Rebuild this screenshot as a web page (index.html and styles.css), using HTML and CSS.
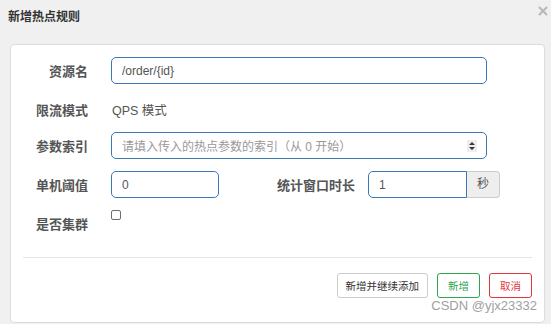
FILE: index.html
```html
<!DOCTYPE html>
<html lang="zh-CN">
<head>
  <meta charset="UTF-8">
  <title>新增热点规则</title>
  <meta name="viewport" content="width=device-width, initial-scale=1.0">
  <link rel="stylesheet" href="styles.css">
</head>
<body>
  <div class="dialogo">
    <div class="cabecera">
      <h3 class="titulo">新增热点规则</h3>
      <span class="cerrar">
        <svg width="10" height="10" viewBox="0 0 10 10"><path d="M1 1 L9 9 M9 1 L1 9" stroke="#b8b8b8" stroke-width="2"/></svg>
      </span>
    </div>

    <div class="panel">
      <div class="fila">
        <label class="etiqueta">资源名</label>
        <input class="campo campo-largo" value="/order/{id}">
      </div>
      <div class="fila">
        <label class="etiqueta">限流模式</label>
        <span class="texto">QPS 模式</span>
      </div>
      <div class="fila">
        <label class="etiqueta">参数索引</label>
        <div class="campo campo-largo selector">
          <span class="placeholder">请填入传入的热点参数的索引（从 0 开始）</span>
          <span class="flechas">
            <svg width="10" height="12" viewBox="0 0 10 12"><path d="M2 5 L5 2 L8 5 Z M2 7 L5 10 L8 7 Z" fill="#333"/></svg>
          </span>
        </div>
      </div>
      <div class="fila">
        <label class="etiqueta">单机阈值</label>
        <input class="campo campo-corto" value="0">
        <label class="etiqueta etiqueta-media">统计窗口时长</label>
        <div class="grupo">
          <input class="campo campo-grupo" value="1">
          <span class="sufijo">秒</span>
        </div>
      </div>
      <div class="fila fila-check">
        <label class="etiqueta">是否集群</label>
        <input type="checkbox" class="check">
      </div>

      <div class="separador"></div>

      <div class="botones">
        <button class="btn">新增并继续添加</button>
        <button class="btn btn-ok">新增</button>
        <button class="btn btn-cancel">取消</button>
      </div>
    </div>

    <div class="marca">CSDN @yjx23332</div>
  </div>
</body>
</html>
```

FILE: styles.css
```css
body {
  margin: 0;
  background: #f0f0f0;
  font-family: "Liberation Sans", "Noto Sans CJK SC", sans-serif;
  color: #555;
}
.dialogo {
  position: relative;
  width: 551px;
  height: 324px;
}
.cabecera {
  height: 44px;
  position: relative;
}
.titulo {
  margin: 0;
  padding: 10px 0 0 8px;
  font-size: 12px;
  line-height: 15px;
  color: #333;
}
.cerrar {
  position: absolute;
  top: 2px;
  right: 3px;
}
.panel {
  margin-left: 10px;
  width: 533px;
  height: 265px;
  background: #fff;
  border: 1px solid #dcdcdc;
  border-radius: 4px;
  box-sizing: content-box;
  padding-top: 12px;
}
.fila {
  display: flex;
  align-items: center;
  height: 27px;
  margin-bottom: 12px;
}
.fila:nth-child(2) {
  margin-top: 1px;
  margin-bottom: 9px;
}
.fila-check {
  align-items: flex-start;
  margin-top: -1px;
}
.etiqueta {
  width: 77px;
  text-align: right;
  font-size: 13px;
  font-weight: bold;
  color: #555;
  padding-right: 23px;
  flex-shrink: 0;
}
.etiqueta-media {
  width: 136px;
  padding-right: 13px;
}
.fila-check .etiqueta {
  padding-top: 5px;
}
.texto {
  font-size: 12.5px;
  color: #555;
  padding-left: 1px;
}
.campo {
  box-sizing: border-box;
  height: 27px;
  border: 1px solid #3a78b5;
  border-radius: 5px;
  padding: 0 10px;
  font-family: inherit;
  font-size: 12px;
  color: #555;
  background: #fff;
  outline: none;
}
.campo-largo {
  width: 376px;
}
.campo-corto {
  width: 108px;
}
.selector {
  display: flex;
  align-items: center;
  justify-content: space-between;
  padding-right: 9px;
}
.placeholder {
  color: #999;
}
.flechas {
  display: flex;
  background: #eee;
  height: 12px;
}
.grupo {
  display: flex;
}
.campo-grupo {
  width: 99px;
  border-radius: 5px 0 0 5px;
}
.sufijo {
  box-sizing: border-box;
  width: 33px;
  height: 27px;
  line-height: 25px;
  text-align: center;
  font-size: 12px;
  background: #eee;
  border: 1px solid #ccc;
  border-left: none;
  border-radius: 0 4px 4px 0;
}
.check {
  appearance: none;
  margin: 1px 0 0 0;
  width: 10px;
  height: 10px;
  border: 1px solid #707070;
  border-radius: 2px;
  background: #fff;
}
.separador {
  margin: 21px 12px 0 12px;
  border-top: 1px solid #e5e5e5;
}
.botones {
  display: flex;
  justify-content: flex-end;
  gap: 9px;
  margin: 15px 12px 0 0;
}
.btn {
  height: 25px;
  padding: 0 8px;
  background: #fff;
  border: 1px solid #ccc;
  border-radius: 3px;
  font-family: inherit;
  font-size: 10.5px;
  color: #333;
}
.btn-ok,
.btn-cancel {
  padding: 0 10px;
}
.btn-ok {
  border-color: #2ea44f;
  color: #2ea44f;
}
.btn-cancel {
  border-color: #e0353d;
  color: #e0353d;
}
.marca {
  position: absolute;
  right: 14px;
  top: 298px;
  font-size: 13px;
  color: #a0a0a0;
  text-shadow: 0 0 2px #fff;
}
```
